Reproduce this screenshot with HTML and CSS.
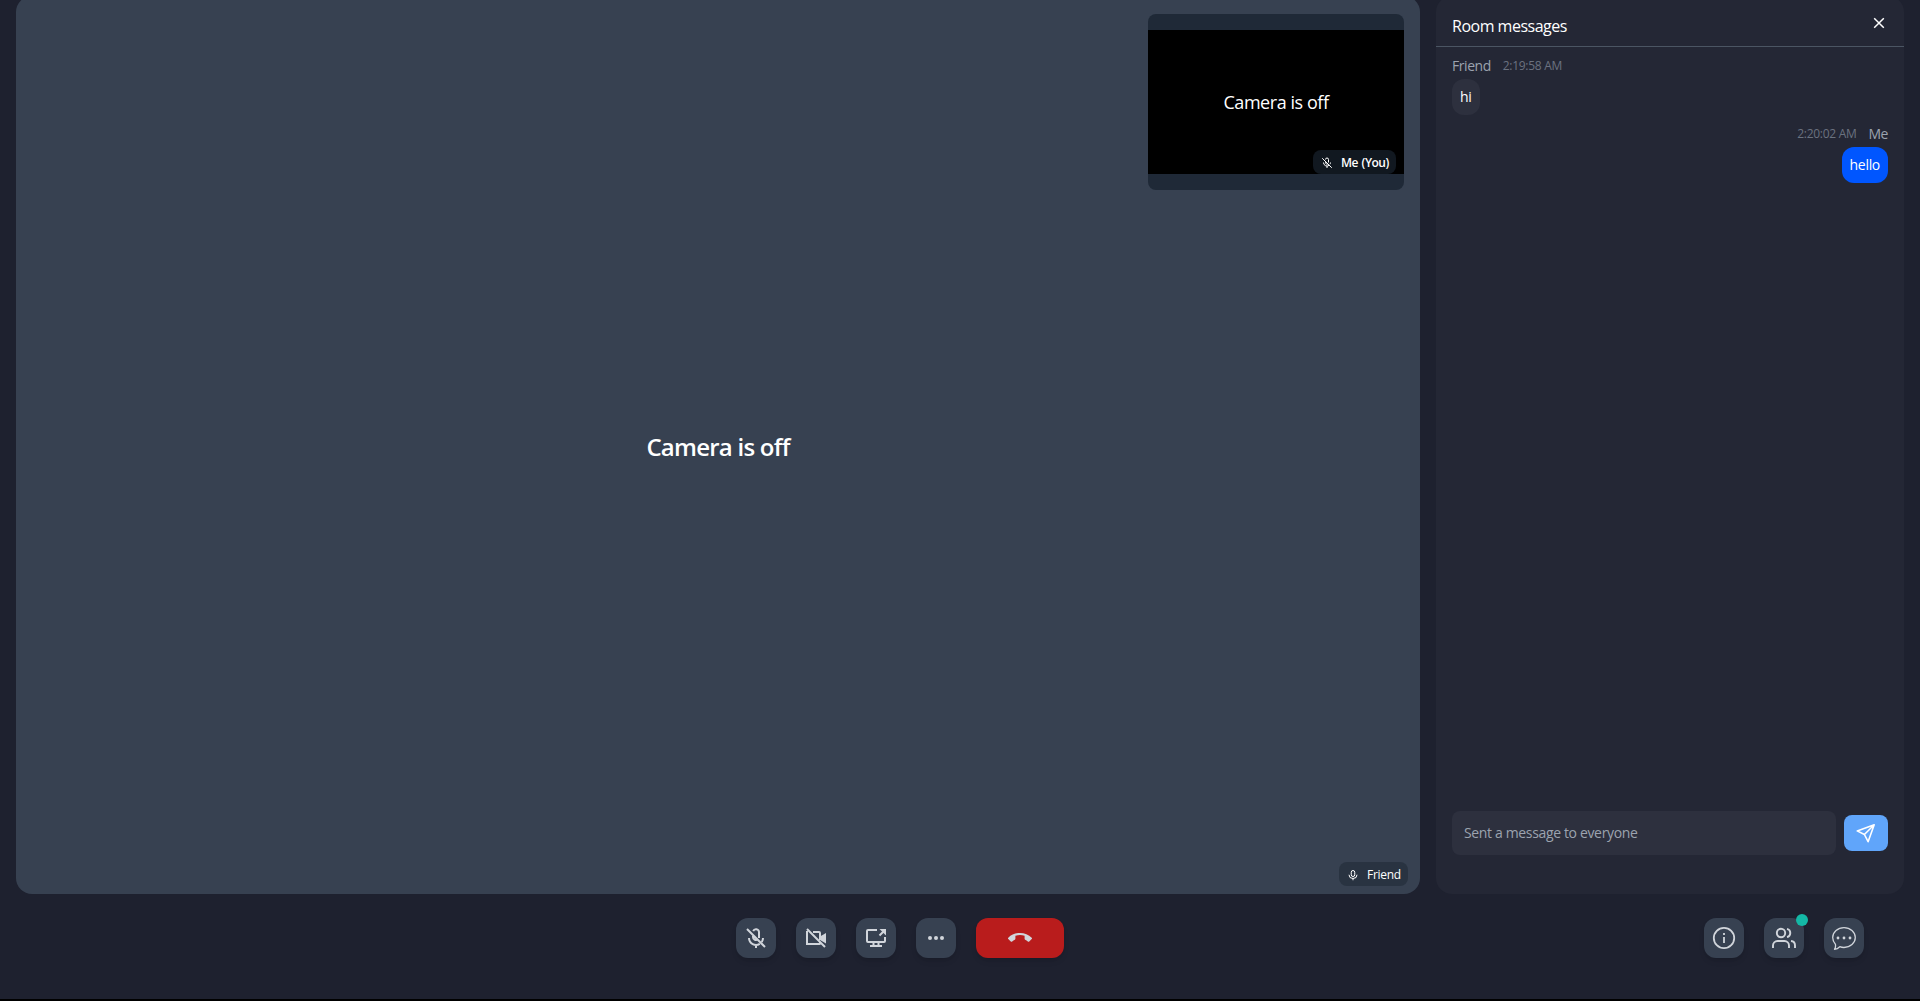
FILE: index.html
```html
<!DOCTYPE html>
<html lang="en">
<head>
<meta charset="utf-8">
<title>Room</title>
<link rel="stylesheet" href="styles.css">
</head>
<body>
<div class="app">
  <main class="stage">
    <section class="video">
      <h2 class="video-off"><span>Camera is off</span></h2>
      <div class="self">
        <div class="self-feed"><span>Camera is off</span></div>
        <div class="tag tag-self">
          <svg viewBox="0 0 24 24" width="12" height="12" fill="none" stroke="currentColor" stroke-width="2"><path d="M2.5 2.5l19 19M9 9v2.5a3 3 0 0 0 5 2M9 5a3 3 0 0 1 6 0v6M5 11a7 7 0 0 0 11 5.8M19 11a7 7 0 0 1-1 3.5M12 18v4"/></svg>
          <span>Me (You)</span>
        </div>
      </div>
      <div class="tag tag-friend">
        <svg viewBox="0 0 24 24" width="12" height="12" fill="none" stroke="currentColor" stroke-width="2"><rect x="8.5" y="3" width="7" height="12" rx="3.5"/><path d="M4 11.5a8 7.5 0 0 0 16 0M12 19v3.5"/></svg>
        <span>Friend</span>
      </div>
    </section>
    <aside class="chat">
      <header class="chat-head">
        <h1>Room messages</h1>
        <svg class="close" viewBox="0 0 12 12" width="12" height="12" fill="none" stroke="currentColor" stroke-width="1.5"><path d="M1.2 1.2l9.6 9.6M10.8 1.2L1.2 10.8"/></svg>
      </header>
      <div class="messages">
        <div class="message">
          <div class="meta"><span class="name name-friend">Friend</span><span class="time">2:19:58 AM</span></div>
          <p class="bubble">hi</p>
        </div>
        <div class="message mine">
          <div class="meta"><span class="time">2:20:02 AM</span><span class="name">Me</span></div>
          <p class="bubble">hello</p>
        </div>
      </div>
      <form class="composer">
        <div class="field"><span>Sent a message to everyone</span></div>
        <button class="send" type="button" aria-label="Send">
          <svg viewBox="0 0 20 20" width="20" height="20" fill="none" stroke="currentColor" stroke-width="1.6" stroke-linejoin="round"><path d="M18.2 1.8L1.2 7.9l7.2 3.6 3.7 7.2zM18.2 1.8L8.4 11.5"/></svg>
        </button>
      </form>
    </aside>
  </main>
  <footer class="bar">
    <div class="controls">
      <button class="btn" aria-label="Unmute"><svg viewBox="0 0 24 24" width="24" height="24" fill="none" stroke="currentColor" stroke-width="2"><path d="M3 3l18 18M9 8.5v2.5a3 3 0 0 0 4.6 2.5M9.2 5.2A3 3 0 0 1 15 6v6M5 12a7 7 0 0 0 10.8 5.8M19 12a7 7 0 0 1-1.2 4M12 18v4"/></svg></button>
      <button class="btn" aria-label="Start camera"><svg viewBox="0 0 24 24" width="24" height="24" fill="none" stroke="currentColor" stroke-width="2"><path d="M3 3l18 18M3 5v13h12.500a.5.5 0 0 0 .5-.5v-1M9 6h6a1 1 0 0 1 1 1v7"/><path d="M16 10.500L22 7v10.500L16 14z" fill="currentColor" stroke="none"/></svg></button>
      <button class="btn" aria-label="Share screen"><svg viewBox="0 0 24 24" width="24" height="24" fill="none" stroke="currentColor" stroke-width="2"><path d="M13 4H4a1 1 0 0 0-1 1v10a1 1 0 0 0 1 1h16a1 1 0 0 0 1-1v-4M9.500 16v4M14.500 16v4M6 20h12M15.500 9.500L20.500 4.500"/><path d="M15.500 3H22v6.500z" fill="currentColor" stroke="none"/></svg></button>
      <button class="btn" aria-label="More"><svg viewBox="0 0 24 24" width="24" height="24" fill="currentColor"><circle cx="6" cy="12" r="2"/><circle cx="12" cy="12" r="2"/><circle cx="18" cy="12" r="2"/></svg></button>
      <button class="btn btn-end" aria-label="Leave call"><svg viewBox="0 0 24 24" width="24" height="24" fill="currentColor"><path d="M12 9c-1.600 0-3.150.250-4.600.720v3.100c0 .390-.230.740-.560.900-.980.490-1.870 1.120-2.660 1.850-.180.180-.430.280-.7.280-.280 0-.530-.110-.710-.290L.290 13.080a.996.996 0 0 1 0-1.410C3.340 8.780 7.460 7 12 7s8.660 1.780 11.710 4.670c.180.180.290.430.290.710 0 .280-.110.530-.290.710l-2.480 2.480c-.180.180-.430.290-.710.290-.270 0-.520-.110-.700-.280-.790-.740-1.690-1.360-2.670-1.850a1 1 0 0 1-.560-.900v-3.100C15.150 9.250 13.600 9 12 9z"/></svg></button>
    </div>
    <div class="panels">
      <button class="btn" aria-label="Details"><svg viewBox="0 0 24 24" width="24" height="24" fill="none" stroke="currentColor" stroke-width="1.800"><circle cx="12" cy="12" r="10.200"/><path d="M12 11v6M12 7v2"/></svg></button>
      <button class="btn" aria-label="People"><svg viewBox="0 0 24 24" width="24" height="24" fill="none" stroke="currentColor" stroke-width="1.900"><circle cx="9" cy="7" r="4.200"/><path d="M1 22v-2.500a4.500 4.500 0 0 1 4.500-4.500h7a4.500 4.500 0 0 1 4.500 4.500V22M15 2.900a4.200 4.200 0 0 1 0 8.200M19 15a4.500 4.500 0 0 1 4 4.500V22"/></svg><span class="dot"></span></button>
      <button class="btn" aria-label="Chat"><svg viewBox="0 0 24 24" width="24" height="24" fill="none" stroke="currentColor" stroke-width="1.300" stroke-linejoin="round"><path d="M12 1.700c6.200 0 11.300 4.400 11.300 9.900S18.200 21.500 12 21.500c-1.500 0-3-.3-4.200-.8-1.500 1.500-3.200 2.400-5.300 2.600 1-1.500 1.300-3.300.9-5.100C1.700 16.500.700 14.200.700 11.600.700 6.100 5.800 1.700 12 1.700z"/><g fill="currentColor" stroke="none"><circle cx="6" cy="12" r="1.400"/><circle cx="12" cy="12" r="1.400"/><circle cx="18" cy="12" r="1.400"/></g></svg></button>
    </div>
  </footer>
</div>
</body>
</html>
```
FILE: styles.css
```css
* { box-sizing: border-box; margin: 0; padding: 0; }
body {
  height: 1001px;
  overflow: hidden;
  background: #000;
  color: #fff;
  font-family: "Open Sans", "Noto Sans", sans-serif;
}
button { border: 0; font: inherit; color: inherit; }
svg { display: block; flex: none; }
.app {
  height: 999px;
  display: flex;
  flex-direction: column;
  overflow: hidden;
  background: #1e212f;
}
.stage {
  display: flex;
  gap: 16px;
  flex: none;
  height: 898px;
  margin-top: -4px;
  padding: 0 16px;
}
.video {
  position: relative;
  flex: 1;
  display: flex;
  align-items: center;
  justify-content: center;
  border-radius: 16px;
  background: #374151;
}
.video-off { font-size: 24px; line-height: 32px; font-weight: 600; letter-spacing: -0.75px; padding-top: 3px; }
.self {
  position: absolute;
  top: 18px;
  right: 16px;
  width: 256px;
  height: 176px;
  padding: 16px 0;
  border-radius: 8px;
  background: #1f2937;
}
.self-feed {
  height: 144px;
  display: flex;
  align-items: center;
  justify-content: center;
  background: #000;
  font-size: 18px;
  letter-spacing: -0.45px;
}
.tag {
  position: absolute;
  display: flex;
  align-items: center;
  gap: 8px;
  height: 24px;
  padding: 1px 8px 0;
  border-radius: 8px;
  font-size: 12px;
  line-height: 16px;
  white-space: nowrap;
}
.tag-self { right: 8px; bottom: 16px; width: 83px; background: #111820; font-weight: 600; letter-spacing: -0.5px; word-spacing: 1px; }
.tag-friend { right: 12px; bottom: 8px; width: 69px; background: #293341; letter-spacing: -0.3px; }
.chat {
  width: 468px;
  display: flex;
  flex-direction: column;
  border-radius: 16px;
  background: #242735;
}
.chat-head {
  display: flex;
  justify-content: space-between;
  height: 51px;
  padding: 18px 19px 0 16px;
  border-bottom: 1px solid #4b5563;
}
.chat-head h1 { font-size: 16px; line-height: 25px; font-weight: 400; letter-spacing: -0.5px; }
.close { margin-top: 3px; }
.messages { flex: 1; display: flex; flex-direction: column; gap: 8px; padding: 8px 16px; }
.message { display: flex; flex-direction: column; align-items: flex-start; gap: 4px; }
.mine { align-items: flex-end; }
.meta { display: flex; align-items: center; gap: 12px; height: 20px; }
.name { font-size: 14px; color: #9ca3af; letter-spacing: -0.45px; }
.time { font-size: 12px; color: #6b7280; letter-spacing: -0.3px; }
.bubble {
  height: 36px;
  padding: 8px;
  border-radius: 12px;
  background: #2d303e;
  font-size: 14px;
  line-height: 20px;
  letter-spacing: -0.3px;
}
.mine .bubble { background: #0056ff; }
.composer { display: flex; align-items: center; gap: 8px; height: 44px; margin: 0 16px 39px; }
.field {
  flex: 1;
  height: 44px;
  padding: 12px;
  border-radius: 8px;
  background: #2d303e;
  color: #9ca3af;
  font-size: 14px;
  line-height: 20px;
  letter-spacing: -0.35px;
}
.send {
  display: flex;
  align-items: center;
  justify-content: center;
  width: 44px;
  height: 36px;
  border-radius: 8px;
  background: #60a5fa;
}
.bar {
  display: grid;
  grid-template-columns: 1fr auto;
  padding: 24px 56px 0 736px;
}
.controls, .panels { display: flex; gap: 20px; }
.btn {
  position: relative;
  display: flex;
  align-items: center;
  justify-content: center;
  width: 40px;
  height: 40px;
  border-radius: 12px;
  background: #374151;
  color: #d1d5db;
  box-shadow: 0 4px 6px -1px rgba(0, 0, 0, 0.1), 0 2px 4px -2px rgba(0, 0, 0, 0.1);
}
.btn-end { width: 88px; background: #b91c1c; }
.dot {
  position: absolute;
  top: -4px;
  right: -4px;
  width: 12px;
  height: 12px;
  border-radius: 50%;
  background: #14b8a6;
}
```
